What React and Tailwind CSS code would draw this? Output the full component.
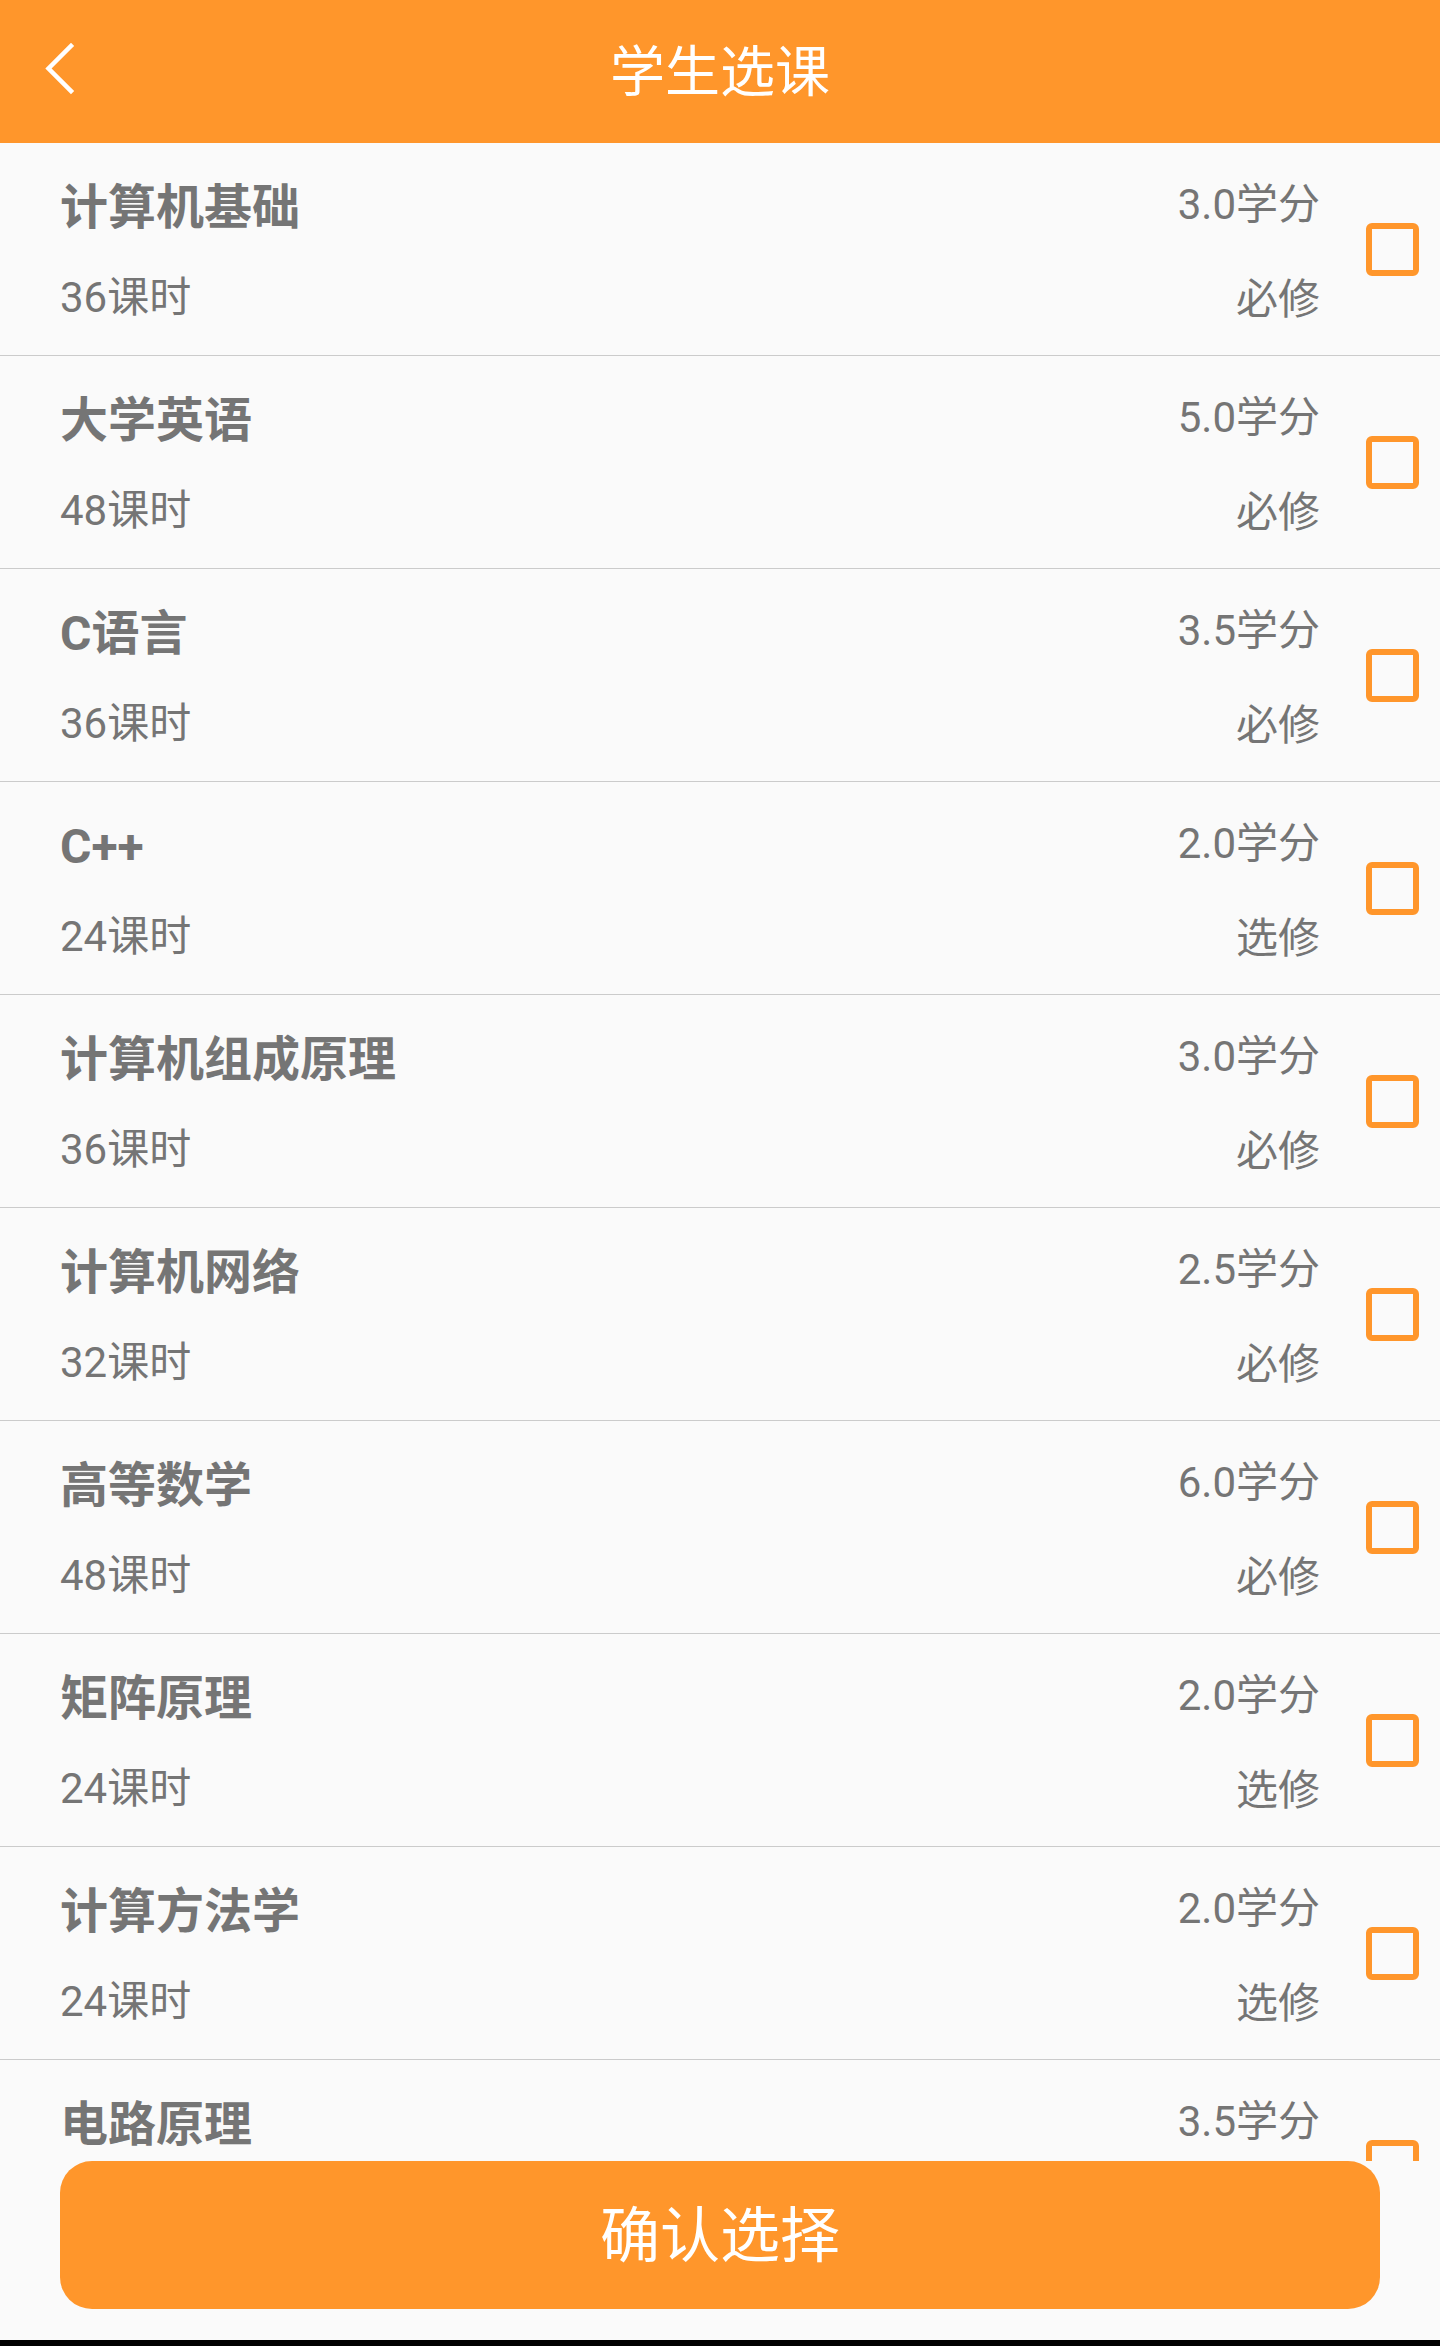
import React from "react";

const courses = [
  { name: "计算机基础", hours: "36课时", credit: "3.0学分", type: "必修" },
  { name: "大学英语", hours: "48课时", credit: "5.0学分", type: "必修" },
  { name: "C语言", hours: "36课时", credit: "3.5学分", type: "必修" },
  { name: "C++", hours: "24课时", credit: "2.0学分", type: "选修" },
  { name: "计算机组成原理", hours: "36课时", credit: "3.0学分", type: "必修" },
  { name: "计算机网络", hours: "32课时", credit: "2.5学分", type: "必修" },
  { name: "高等数学", hours: "48课时", credit: "6.0学分", type: "必修" },
  { name: "矩阵原理", hours: "24课时", credit: "2.0学分", type: "选修" },
  { name: "计算方法学", hours: "24课时", credit: "2.0学分", type: "选修" },
  { name: "电路原理", hours: "36课时", credit: "3.5学分", type: "必修" },
];

function Row({ c }) {
  return (
    <div className="flex h-[213px] shrink-0 items-center border-b border-[#cbcbcb] pl-[60px] pr-[21px]">
      <div className="flex h-full flex-1 flex-col pt-[37px]">
        <div className="text-[48px] font-bold leading-[56px] text-[#757575]">{c.name}</div>
        <div className="mt-[38px] text-[42px] leading-[48px] text-[#757575]">{c.hours}</div>
      </div>
      <div className="flex h-full flex-col items-end pt-[38px]">
        <div className="text-[42px] leading-[48px] text-[#757575]">{c.credit}</div>
        <div className="mt-[47px] text-[42px] leading-[48px] text-[#757575]">{c.type}</div>
      </div>
      <div className="ml-[46px] h-[53px] w-[53px] rounded-[6px] border-[6px] border-[#ff962b]" />
    </div>
  );
}

export default function App() {
  return (
    <div
      className="flex h-[2346px] w-[1440px] flex-col overflow-hidden bg-[#fafafa]"
      style={{ fontFamily: "Roboto, 'Noto Sans CJK SC', sans-serif" }}
    >
      <header className="relative flex h-[143px] shrink-0 items-center justify-center bg-[#ff962b]">
        <svg
          className="absolute left-[40px] top-[40px]"
          width="40"
          height="60"
          viewBox="0 0 40 60"
          fill="none"
        >
          <path d="M31 6 L8.5 28.5 L31 51" stroke="#ffffff" strokeWidth="4.5" strokeLinecap="square" />
        </svg>
        <div className="text-[55px] leading-[64px] text-white">学生选课</div>
      </header>
      <div className="flex min-h-0 flex-1 flex-col overflow-hidden">
        {courses.map((c) => (
          <Row key={c.name} c={c} />
        ))}
      </div>
      <div className="shrink-0 px-[60px] pb-[31px]">
        <button className="flex h-[148px] w-full items-center justify-center rounded-[32px] bg-[#ff962b] pt-[4px] text-[60px] leading-[70px] text-white">
          确认选择
        </button>
      </div>
      <div className="h-[6px] shrink-0 bg-black" />
    </div>
  );
}
